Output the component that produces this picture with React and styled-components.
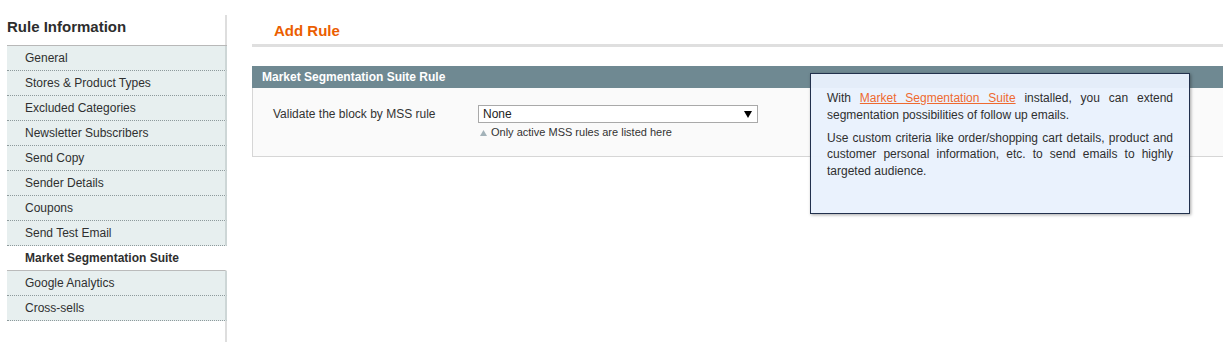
import React from "react";
import styled, { createGlobalStyle } from "styled-components";

const Global = createGlobalStyle`
  html, body { margin: 0; padding: 0; background: #fff; overflow: hidden; }
  body { font-family: "Liberation Sans", Arial, sans-serif; font-size: 12px; color: #2f2f2f; }
  * { box-sizing: border-box; }
`;

const Page = styled.div`
  display: flex;
  align-items: stretch;
  min-height: 342px;
  padding-top: 15px;
`;

const Sidebar = styled.aside`
  flex: 0 0 227px;
  width: 227px;
  padding-left: 7px;
  border-right: 2px solid #dedede;
`;

const SideTitle = styled.h3`
  margin: 0;
  padding: 3px 0 10px;
  font-size: 15px;
  line-height: 17px;
  font-weight: bold;
  color: #2d2d2d;
`;

const Tabs = styled.ul`
  list-style: none;
  margin: 0 -2px 0 0;
  padding: 0;
  border-top: 1px solid #b8b8b8;
`;

const Tab = styled.li`
  padding: 3px 18px 3px;
  line-height: 18px;
  font-size: 12px;
  color: #2f2f2f;
  background: ${(p) => (p.$active ? "#ffffff" : "#e7efef")};
  font-weight: ${(p) => (p.$active ? "bold" : "normal")};
  border-bottom: 1px ${(p) => (p.$active ? "solid #bbbbbb" : "dotted #8e9a9c")};
  border-right: 2px solid ${(p) => (p.$active ? "transparent" : "#cdd6d6")};
`;

const Main = styled.main`
  flex: 1;
  min-width: 0;
  padding-left: 25px;
`;

const Header = styled.div`
  padding: 7px 0 4px 22px;
  border-bottom: 3px solid #dfdfdf;
`;

const HeaderTitle = styled.h3`
  margin: 0;
  font-size: 15px;
  line-height: 18px;
  font-weight: bold;
  color: #eb5e00;
`;

const Fieldset = styled.section`
  position: relative;
  margin: 19px -1px 0 0;
`;

const Legend = styled.div`
  height: 22px;
  line-height: 22px;
  padding-left: 10px;
  background: #6f8992;
  color: #ffffff;
  font-weight: bold;
  font-size: 12px;
`;

const Body = styled.div`
  background: #fafafa;
  border: 1px solid #d6d6d6;
  border-top: none;
  padding: 17px 20px 17px;
`;

const FormRow = styled.div`
  display: grid;
  grid-template-columns: 205px 280px;
  align-items: start;
`;

const Label = styled.label`
  line-height: 18px;
  color: #333;
`;

const Select = styled.div`
  display: flex;
  align-items: center;
  justify-content: space-between;
  height: 18px;
  padding: 0 5px 0 4px;
  background: #fff;
  border: 1px solid #a9a9a9;
  color: #222;
  line-height: 16px;
`;

const Note = styled.div`
  display: flex;
  align-items: center;
  gap: 4px;
  margin: 3px 0 0 2px;
  font-size: 11px;
  line-height: 13px;
  color: #333;
`;

const Tooltip = styled.div`
  position: absolute;
  left: 558px;
  top: 7px;
  width: 380px;
  height: 141px;
  padding: 16px 16px;
  background: rgba(233, 241, 253, 0.96);
  border: 1px solid #22314d;
  box-shadow: 1px 1px 3px rgba(0, 0, 0, 0.35);
  color: #2f2f2f;
  font-size: 12px;
  line-height: 16.5px;
`;

const TipPara = styled.p`
  margin: 0 0 6.5px;
  text-align: justify;
`;

const TipLink = styled.a`
  color: #ee6a30;
  text-decoration: underline;
`;

const tabs = [
  "General",
  "Stores & Product Types",
  "Excluded Categories",
  "Newsletter Subscribers",
  "Send Copy",
  "Sender Details",
  "Coupons",
  "Send Test Email",
  "Market Segmentation Suite",
  "Google Analytics",
  "Cross-sells",
];

export default function App() {
  return (
    <>
      <Global />
      <Page>
        <Sidebar>
          <SideTitle>Rule Information</SideTitle>
          <Tabs>
            {tabs.map((t) => (
              <Tab key={t} $active={t === "Market Segmentation Suite"}>
                {t}
              </Tab>
            ))}
          </Tabs>
        </Sidebar>
        <Main>
          <Header>
            <HeaderTitle>Add Rule</HeaderTitle>
          </Header>
          <Fieldset>
            <Legend>Market Segmentation Suite Rule</Legend>
            <Body>
              <FormRow>
                <Label>Validate the block by MSS rule</Label>
                <div>
                  <Select>
                    <span>None</span>
                    <svg width="8" height="7" viewBox="0 0 8 7">
                      <path d="M0 0H8L4 7Z" fill="#000" />
                    </svg>
                  </Select>
                  <Note>
                    <svg width="7" height="6" viewBox="0 0 7 6">
                      <path d="M3.5 0L7 6H0Z" fill="#a3b2b9" />
                    </svg>
                    <span>Only active MSS rules are listed here</span>
                  </Note>
                </div>
              </FormRow>
            </Body>
            <Tooltip>
              <TipPara>
                With <TipLink href="#">Market Segmentation Suite</TipLink> installed, you can extend
                segmentation possibilities of follow up emails.
              </TipPara>
              <TipPara>
                Use custom criteria like order/shopping cart details, product and customer personal
                information, etc. to send emails to highly targeted audience.
              </TipPara>
            </Tooltip>
          </Fieldset>
        </Main>
      </Page>
    </>
  );
}
